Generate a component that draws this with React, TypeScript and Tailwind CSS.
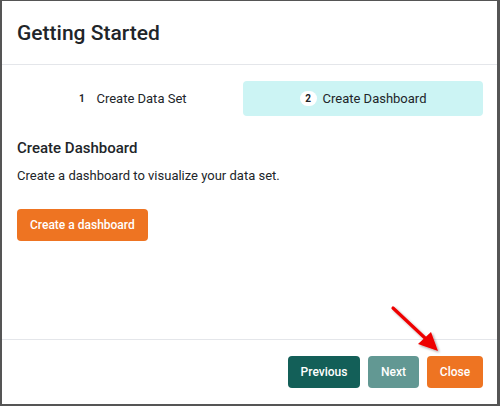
import React from 'react'

const Step = ({ n, label, active }: { n: number; label: string; active?: boolean }) => (
    <div
        className={
            'flex h-[35px] items-center justify-center gap-[6px] rounded text-[13px] text-[#212529] ' +
            (active ? 'bg-[#ccf4f4]' : '')
        }
    >
        <span
            className={
                'flex h-[15px] min-w-[17px] items-center justify-center rounded-full text-[10px] font-bold ' +
                (active ? 'bg-white' : '')
            }
        >
            {n}
        </span>
        <span>{label}</span>
    </div>
)

export default function App() {
    return (
        <div className="h-[406px] w-[500px] bg-[#555] pl-[2px] pr-[3px] pt-[1px] pb-[2px] font-['Roboto',sans-serif]">
            <div className="relative flex h-full flex-col bg-white">
                <div className="h-[64px] border-b border-[#e4e6ea] px-[15px] pt-[18px]">
                    <h1 className="text-[21px] font-medium leading-[28px] text-[#212529]">Getting Started</h1>
                </div>

                <div className="flex-1 px-[15px]">
                    <div className="mt-[16px] grid grid-cols-[226px_240px]">
                        <Step n={1} label="Create Data Set" />
                        <Step n={2} label="Create Dashboard" active />
                    </div>

                    <h2 className="mt-[22px] text-[15px] font-medium leading-[20px] text-[#212529]">
                        Create Dashboard
                    </h2>
                    <p className="mt-[9px] text-[13px] leading-[18px] text-[#212529]">
                        Create a dashboard to visualize your data set.
                    </p>
                    <button className="mt-[24px] h-[32px] rounded bg-[#ee7422] px-[13px] text-[12px] font-medium text-white">
                        Create a dashboard
                    </button>
                </div>

                <div className="flex h-[65px] items-center justify-end gap-[8px] border-t border-[#e4e6ea] px-[14px] pb-[1px]">
                    <button className="h-[32px] w-[72px] rounded bg-[#135f58] text-[12px] font-medium text-white">
                        Previous
                    </button>
                    <button className="h-[32px] w-[51px] rounded bg-[#629893] text-[12px] font-medium text-white">
                        Next
                    </button>
                    <button className="h-[32px] w-[56px] rounded bg-[#ee7422] text-[12px] font-medium text-white">
                        Close
                    </button>
                </div>

                <svg
                    className="absolute left-[385px] top-[300px]"
                    width="60"
                    height="60"
                    viewBox="0 0 60 60"
                >
                    <defs>
                        <filter id="sh" x="-20%" y="-20%" width="150%" height="150%">
                            <feDropShadow dx="1.5" dy="1.5" stdDeviation="1.2" floodColor="#000" floodOpacity="0.35" />
                        </filter>
                    </defs>
                    <g filter="url(#sh)">
                        <line x1="6" y1="7" x2="38" y2="37" stroke="#ee0000" strokeWidth="3.2" strokeLinecap="round" />
                        <polygon points="51,50 31,43 44,31" fill="#ee0000" />
                    </g>
                </svg>
            </div>
        </div>
    )
}
